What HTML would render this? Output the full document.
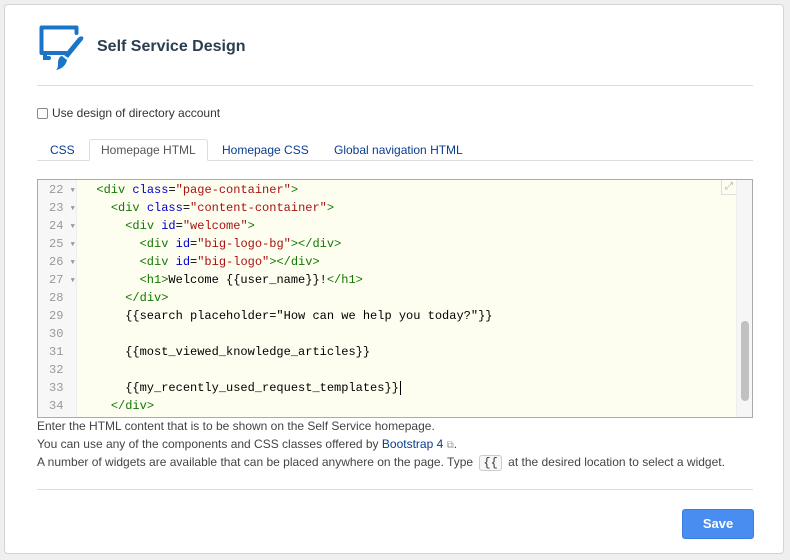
<!DOCTYPE html>
<html><head><meta charset="utf-8"><style>
body{margin:0;width:790px;height:560px;background:#efefef;font-family:"Liberation Sans",sans-serif;position:relative;overflow:hidden}
.card{position:absolute;left:4px;top:4px;width:780px;height:550px;background:#fff;border:1px solid #d4d4d4;border-radius:4px;box-sizing:border-box}
.abs{position:absolute}
h1{position:absolute;left:97px;top:38px;margin:0;font-size:16px;font-weight:bold;color:#2b3e50}
.hr{position:absolute;height:1px;background:#ddd;left:37px;width:716px}
.tabs{position:absolute;left:37px;top:140px;width:716px;height:20px;border-bottom:1px solid #ddd;font-size:12px}
.tab{position:absolute;top:0;height:20px;line-height:20px;color:#0a3d8f}
.tab.act{background:#fff;border:1px solid #ddd;border-bottom:1px solid #fff;border-radius:3px 3px 0 0;color:#555;height:20px;padding:0 11px;top:-1px}
.ed{position:absolute;left:37px;top:179px;width:716px;height:239px;border:1px solid #aaa;box-sizing:border-box;background:#fdfdf0;overflow:hidden}
.gut{position:absolute;left:0;top:0;width:38px;height:100%;background:#f7f7f7;border-right:1px solid #eee}
.ln{position:absolute;font-family:"Liberation Mono",monospace;font-size:12px;height:18px;line-height:18px;white-space:pre}
.num{left:11px;color:#999;width:24px}
.code{left:44px;color:#000}
.t{color:#170}.a{color:#00c}.s{color:#a11}
.arr{font-size:7px;color:#999;vertical-align:1px}
.sb{position:absolute;right:0;top:0;width:15px;height:100%;background:#f6f6f6;border-left:1px solid #eee}
.th{position:absolute;left:4px;top:141px;width:8px;height:80px;background:#c1c1c1;border-radius:4px}
.help{position:absolute;left:37px;font-size:12px;color:#444}
.btn{position:absolute;left:682px;top:509px;width:72px;height:30px;background:#4a8df0;border:1px solid #3a7ce0;border-radius:3px;box-sizing:border-box;color:#fff;font-size:13px;font-weight:bold;text-align:center;line-height:28px}
</style></head><body>
<div class="card"></div>
<svg class="abs" style="left:36px;top:22px" width="50" height="50" viewBox="0 0 50 50">
<path d="M30 31H5.5V5.5h35V11" fill="none" stroke="#1a75c8" stroke-width="4" stroke-linejoin="round" stroke-linecap="round"/>
<path d="M9 31v5h4" fill="none" stroke="#1a75c8" stroke-width="4" stroke-linecap="round"/>
<path d="M47 15c1 1 0 3-2 5L32 36l-4-3L42 16c2-2 4-2 5-1z" fill="#1a75c8"/>
<path d="M26 34l5 4c-1 5-5 9-11 10 2-2 2-4 2-7 0-4 2-7 4-7z" fill="#1a75c8"/>
</svg>
<h1>Self Service Design</h1>
<div class="hr" style="top:85px"></div>
<div class="abs" style="left:37px;top:108px;width:11px;height:11px;border:1px solid #888;border-radius:2px;box-sizing:border-box"></div>
<div class="abs" style="left:52px;top:106px;font-size:12px;color:#333">Use design of directory account</div>
<div class="tabs">
<div class="tab" style="left:13px">CSS</div>
<div class="tab act" style="left:52px">Homepage HTML</div>
<div class="tab" style="left:185px">Homepage CSS</div>
<div class="tab" style="left:297px">Global navigation HTML</div>
</div>
<div class="ed">
<div class="gut"></div>
<div class="ln num" style="top:1px">22 <span class="arr">▼</span></div>
<div class="ln num" style="top:19px">23 <span class="arr">▼</span></div>
<div class="ln num" style="top:37px">24 <span class="arr">▼</span></div>
<div class="ln num" style="top:55px">25 <span class="arr">▼</span></div>
<div class="ln num" style="top:73px">26 <span class="arr">▼</span></div>
<div class="ln num" style="top:91px">27 <span class="arr">▼</span></div>
<div class="ln num" style="top:109px">28</div>
<div class="ln num" style="top:127px">29</div>
<div class="ln num" style="top:145px">30</div>
<div class="ln num" style="top:163px">31</div>
<div class="ln num" style="top:181px">32</div>
<div class="ln num" style="top:199px">33</div>
<div class="ln num" style="top:217px">34</div>
<div class="ln code" style="top:1px">  <span class="t">&lt;div</span> <span class="a">class</span>=<span class="s">"page-container"</span><span class="t">&gt;</span></div>
<div class="ln code" style="top:19px">    <span class="t">&lt;div</span> <span class="a">class</span>=<span class="s">"content-container"</span><span class="t">&gt;</span></div>
<div class="ln code" style="top:37px">      <span class="t">&lt;div</span> <span class="a">id</span>=<span class="s">"welcome"</span><span class="t">&gt;</span></div>
<div class="ln code" style="top:55px">        <span class="t">&lt;div</span> <span class="a">id</span>=<span class="s">"big-logo-bg"</span><span class="t">&gt;&lt;/div&gt;</span></div>
<div class="ln code" style="top:73px">        <span class="t">&lt;div</span> <span class="a">id</span>=<span class="s">"big-logo"</span><span class="t">&gt;&lt;/div&gt;</span></div>
<div class="ln code" style="top:91px">        <span class="t">&lt;h1&gt;</span>Welcome {{user_name}}!<span class="t">&lt;/h1&gt;</span></div>
<div class="ln code" style="top:109px">      <span class="t">&lt;/div&gt;</span></div>
<div class="ln code" style="top:127px">      {{search placeholder="How can we help you today?"}}</div>
<div class="ln code" style="top:163px">      {{most_viewed_knowledge_articles}}</div>
<div class="ln code" style="top:199px">      {{my_recently_used_request_templates}}<span style="border-left:1px solid #000;margin-left:1px"></span></div>
<div class="ln code" style="top:217px">    <span class="t">&lt;/div&gt;</span></div>
<div class="sb"><div class="th"></div></div>
<div class="abs" style="right:16px;top:0;width:14px;height:14px;border-left:1px solid #ddd;border-bottom:1px solid #ddd;color:#aaa;font-size:10px;text-align:center;line-height:14px">⤢</div>
</div>
<div class="help" style="top:419px">Enter the HTML content that is to be shown on the Self Service homepage.</div>
<div class="help" style="top:437px">You can use any of the components and CSS classes offered by <span style="color:#0a3d8f">Bootstrap 4</span> <span style="color:#999;font-size:10px">⧉</span>.</div>
<div class="help" style="top:455px">A number of widgets are available that can be placed anywhere on the page. Type <span style="display:inline-block;border:1px solid #ccc;border-radius:3px;padding:0 3px;font-family:'Liberation Mono',monospace;color:#333;background:#f7f7f7;margin:0 3px">{{</span> at the desired location to select a widget.</div>
<div class="hr" style="top:489px"></div>
<div class="btn">Save</div>
</body></html>
